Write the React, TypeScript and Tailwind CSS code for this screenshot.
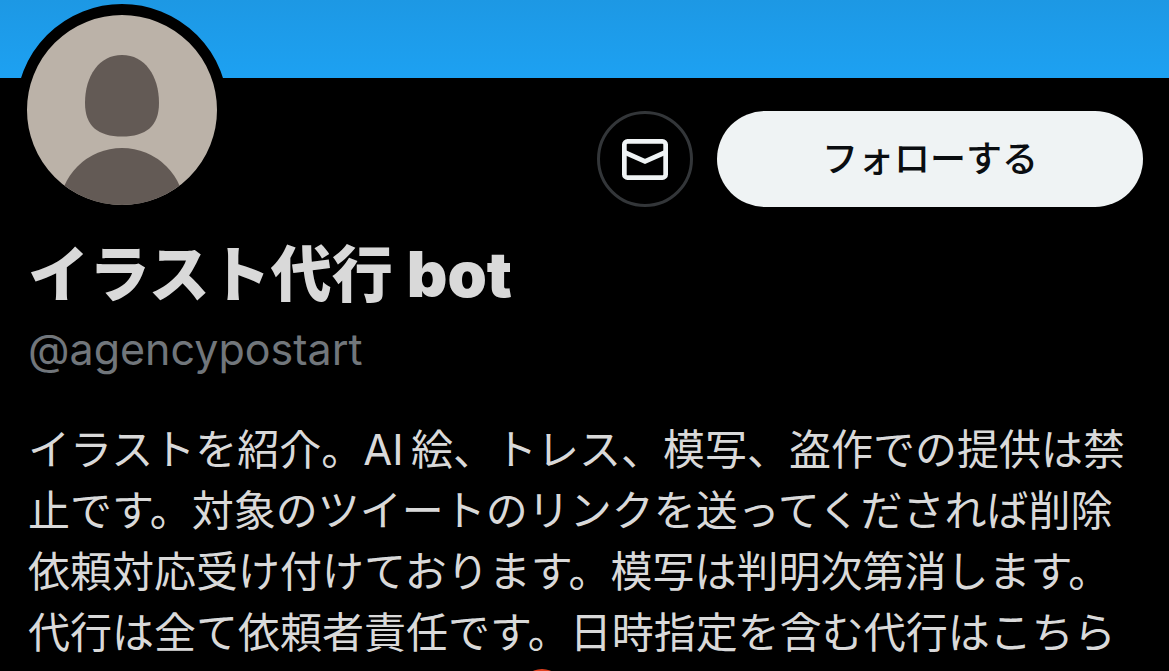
import React from 'react'

interface ProfileInterface {
    name: string,
    suffix: string,
    handle: string,
    bio: string
};

const profile: ProfileInterface = {
    name: 'イラスト代行',
    suffix: 'bot',
    handle: '@agencypostart',
    bio: 'イラストを紹介。AI\u2009絵、トレス、模写、盗作での提供は禁止です。対象のツイートのリンクを送ってくだされば削除依頼対応受け付けております。模写は判明次第消します。代行は全て依頼者責任です。日時指定を含む代行はこちら'
};

function Avatar() {
    return (
        <svg className="w-[212px] h-[212px] shrink-0 rounded-full border-[11px] border-black bg-[#bbb2a8]" viewBox="0 0 190 190" role="img" aria-label="プロフィール画像">
            <path d="M95 40C118 40 132 61 132 88C132 111 119 121.5 95 121.5C71 121.5 58 111 58 88C58 61 72 40 95 40Z" fill="#635a55" />
            <circle cx="95" cy="196" r="63" fill="#635a55" />
        </svg>
    );
}

function MailIcon() {
    return (
        <svg className="w-[46px] h-[41px]" viewBox="0 0 46 41" fill="none" stroke="#eff3f4" strokeWidth="4.7" aria-hidden="true">
            <rect x="2.35" y="2.35" width="41.3" height="36.3" rx="3.2" />
            <path d="M3 13.5L23 22.4L43 13.5" />
        </svg>
    );
}

function Actions() {
    return (
        <div className="flex items-center gap-6">
            <button className="flex w-24 h-24 items-center justify-center rounded-full border-[3px] border-[#333639]" aria-label="メッセージ">
                <MailIcon />
            </button>
            <button className="w-[426px] h-24 rounded-full bg-[#eff3f4] text-[36px] font-medium text-[#0a0d10]">
                フォローする
            </button>
        </div>
    );
}

export default function App() {
    return (
        <main lang="ja" className="h-screen overflow-hidden bg-black font-['Inter','Noto_Sans_CJK_JP',sans-serif] text-[#d9d9d9]">
            <div className="h-[78px] bg-linear-to-b from-[#1d98e4] to-[#1da1f2]"></div>
            <header className="-mt-[74px] flex items-end justify-between pl-4 pr-[26px]">
                <Avatar />
                <div className="pb-[9px]">
                    <Actions />
                </div>
            </header>
            <section className="px-7 pt-[18px]">
                <h1 className="flex items-baseline gap-3.5 text-[61px] leading-[80px] font-extrabold">
                    <span>{profile.name}</span>
                    <span className="text-[63px] font-black">{profile.suffix}</span>
                </h1>
                <p className="pt-1 text-[43px] leading-[60px] text-[#71767b]">{profile.handle}</p>
                <p className="mt-10 text-[42px] leading-[61px]">{profile.bio}</p>
                <div className="pt-1.5 pl-[493px]">
                    <div className="w-[42px] h-[42px] rounded-full bg-[#e0401f]"></div>
                </div>
            </section>
        </main>
    );
}
